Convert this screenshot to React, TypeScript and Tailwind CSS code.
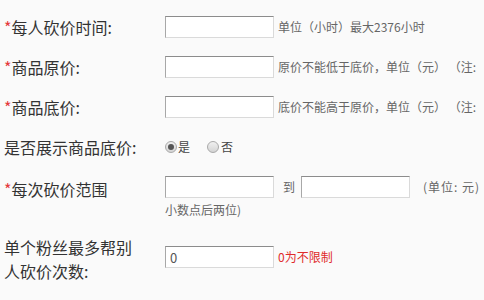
import React from "react";

const inputCls =
  "w-[109px] h-[22px] shrink-0 border border-t-[#8c8c8c] border-l-[#a8a8a8] border-r-[#dadada] border-b-[#dadada] bg-white outline-none px-[4px] text-[13px] text-[#555]";

function Label({ req, children }: { req?: boolean; children: React.ReactNode }) {
  return (
    <div className="w-[136px] mr-[25px] shrink-0 text-[16px] leading-6 text-[#333]">
      {req && <span className="text-[#e4393c]">*</span>}
      {children}
    </div>
  );
}

function Radio({ checked }: { checked?: boolean }) {
  return (
    <span className="w-[12px] h-[12px] shrink-0 rounded-full border border-[#a9a9a9] bg-gradient-to-b from-[#f0f0f0] to-[#d4d4d4] flex items-center justify-center">
      {checked && <span className="w-[6px] h-[6px] rounded-full bg-[#555]" />}
    </span>
  );
}

export default function App() {
  return (
    <div className="w-[484px] h-[300px] overflow-hidden bg-[#fafafa] pl-[4px] pt-[7px] font-['Noto_Sans_CJK_SC',sans-serif]">
      <div className="flex h-10 items-center">
        <Label req>每人砍价时间:</Label>
        <input className={inputCls} />
        <span className="ml-[4px] text-[12px] text-[#666] whitespace-nowrap">单位（小时）最大2376小时</span>
      </div>
      <div className="flex h-10 items-center">
        <Label req>商品原价:</Label>
        <input className={inputCls} />
        <span className="ml-[4px] text-[12px] text-[#666] whitespace-nowrap">
          原价不能低于底价，单位（元） （注:
        </span>
      </div>
      <div className="flex h-10 items-center">
        <Label req>商品底价:</Label>
        <input className={inputCls} />
        <span className="ml-[4px] text-[12px] text-[#666] whitespace-nowrap">
          底价不能高于原价，单位（元） （注:
        </span>
      </div>
      <div className="flex h-10 items-center">
        <Label>是否展示商品底价:</Label>
        <div className="flex items-center text-[12px] text-[#444]">
          <Radio checked />
          <span className="ml-[1px]">是</span>
          <span className="ml-[17px]" />
          <Radio />
          <span className="ml-[2px]">否</span>
        </div>
      </div>
      <div className="flex items-start pt-[9px]">
        <div className="mt-[1px]">
          <Label req>每次砍价范围</Label>
        </div>
        <div className="flex flex-col">
          <div className="flex h-[22px] items-center whitespace-nowrap text-[12px] text-[#666]">
            <input className={inputCls} />
            <span className="ml-[9px]">到</span>
            <input className={inputCls + " ml-[6px]"} />
            <span className="ml-[13px] tracking-[1px]">(单位: 元)</span>
          </div>
          <div className="mt-[4px] text-[12px] leading-4 text-[#666]">小数点后两位)</div>
        </div>
      </div>
      <div className="flex items-start mt-[17px]">
        <Label>单个粉丝最多帮别人砍价次数:</Label>
        <div className="flex h-[22px] mt-[11px] items-center">
          <input className={inputCls} defaultValue="0" />
          <span className="ml-[4px] text-[12px] text-[#e02b2b] whitespace-nowrap">0为不限制</span>
        </div>
      </div>
    </div>
  );
}
